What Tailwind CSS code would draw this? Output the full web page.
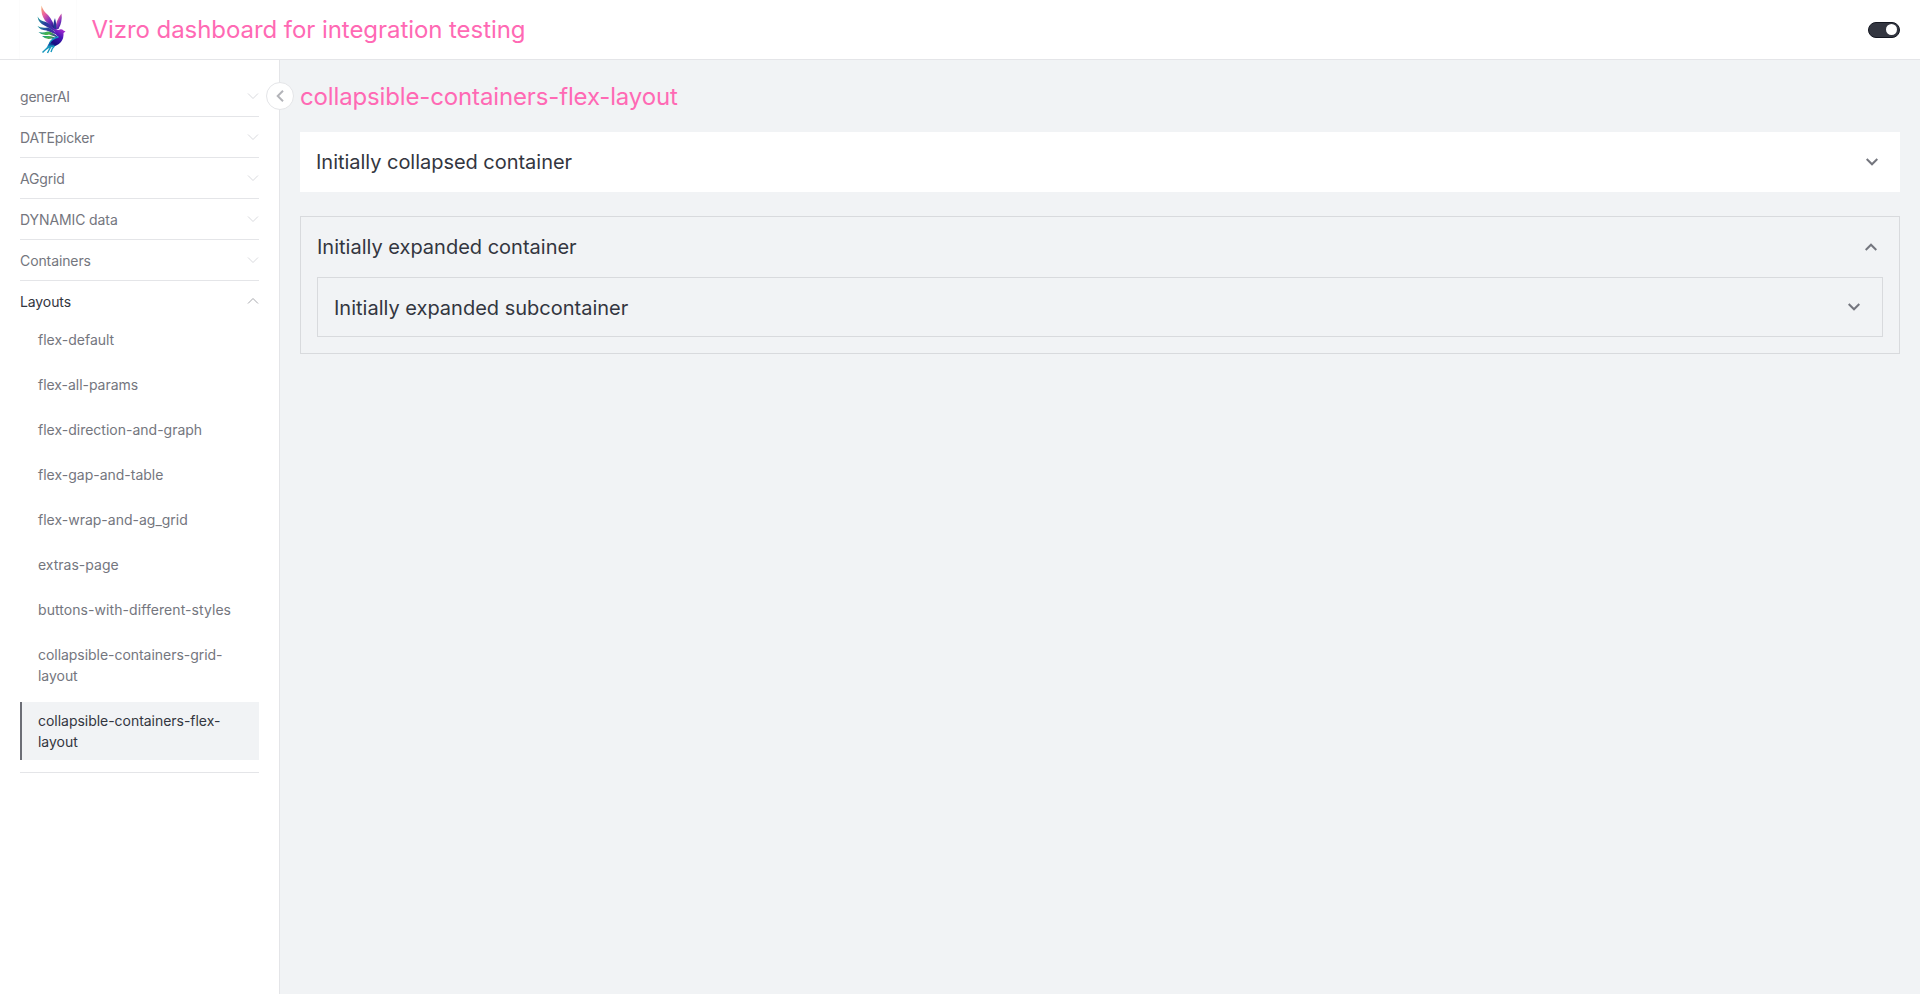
<!DOCTYPE html>
<html lang="en">
<head>
<meta charset="utf-8">
<title>Vizro dashboard for integration testing</title>
<script src="https://cdn.jsdelivr.net/npm/@tailwindcss/browser@4"></script>
</head>
<body class="flex h-screen flex-col overflow-hidden bg-[#f1f3f5] font-['Inter',sans-serif]">
<header class="flex h-[60px] shrink-0 items-center justify-between border-b border-[#e4e5e8] bg-white pr-5 pl-[19px]">
  <div class="flex items-center gap-[14.5px]">
    <svg class="h-[59px] w-[58px] shadow-[inset_1px_0_0_#fcfcfc,inset_-1px_0_0_#fcfcfc]" viewBox="19 0 58 59">
      <defs>
        <linearGradient id="w1" x1="0" y1="0" x2="0.7" y2="1"><stop offset="0" stop-color="#f7b267"/><stop offset=".35" stop-color="#ec5fa0"/><stop offset=".7" stop-color="#7a2fc0"/><stop offset="1" stop-color="#2a1a8c"/></linearGradient>
        <linearGradient id="w2" x1="0" y1="0" x2="1" y2="1"><stop offset="0" stop-color="#19a39a"/><stop offset=".45" stop-color="#2a3c9c"/><stop offset="1" stop-color="#5a1fb0"/></linearGradient>
        <linearGradient id="w3" x1="0" y1="0" x2="1" y2="0.5"><stop offset="0" stop-color="#0d8c9c"/><stop offset=".5" stop-color="#4cb748"/><stop offset="1" stop-color="#26339a"/></linearGradient>
        <linearGradient id="bd" x1="0.8" y1="0" x2="0.2" y2="1"><stop offset="0" stop-color="#b02bd0"/><stop offset=".35" stop-color="#4a16b8"/><stop offset=".75" stop-color="#160d80"/><stop offset="1" stop-color="#1593c4"/></linearGradient>
      </defs>
      <path fill="url(#w1)" d="M41.500 5.500Q40.500 14 45 20.500L55 30Q53.500 21 48 15Q43 11 41.500 5.500Z"/>
      <path fill="url(#w2)" d="M37.500 16.500Q38.500 23 44.500 25.500L56 32Q52.500 25 46 22Q40 21 37.500 16.500Z"/>
      <path fill="url(#w2)" d="M37.500 26Q40 30 46.500 30.500L57.500 35Q53.500 29 47.500 27.500Q41 28.500 37.500 26Z"/>
      <path fill="url(#w3)" d="M38.500 32Q43 36.500 49 34.500L59 38Q53.500 32 47.500 31.500Q43 33 38.500 32Z"/>
      <path fill="url(#w3)" d="M42 36Q46 40 51.500 38.500L58 40Q53 35.500 48 36Z"/>
      <path fill="url(#w1)" d="M61.500 13.500Q62.500 22 58.500 29L55.500 29Q55.500 21 61.500 13.500Z"/>
      <path fill="#233596" d="M55 18Q52.500 24 54 29L56.500 30Q56.500 23 55 18Z"/>
      <path fill="url(#bd)" d="M65.500 31.500L63.500 30.500Q61.500 28.500 58.500 30L53.500 28.500Q55.500 35 58.500 37Q52.500 38 48.500 44L46.500 48Q57 47 61 42Q64 38 63.500 33Z"/>
      <path fill="none" stroke="#1597bd" stroke-width="1.400" d="M58.500 37Q52.500 38 49.500 43M54 46L50 46.500Q46 48.500 42.500 52.500M51 46.500Q49 50 47.500 53M54.500 46Q52 48 51 52"/>
    </svg>
    <div class="text-2xl leading-8 tracking-[-0.06px] text-[#ff69b4]">Vizro dashboard for integration testing</div>
  </div>
  <div class="flex h-4 w-8 items-center justify-end rounded-full border border-[#141721] bg-[#333640] pr-[2px]"><div class="size-[11px] rounded-full bg-white"></div></div>
</header>
<div class="flex min-h-0 flex-1">
  <aside class="relative w-[280px] shrink-0 border-r border-[#e4e5e8] bg-white px-5 pt-4 text-sm text-[#74767e]">
    <div class="absolute top-[22px] -right-[15px] z-10 flex size-7 items-center justify-center rounded-full border border-[#e4e5e8] bg-white"><svg class="h-3 w-2" viewBox="0 0 8 12" fill="none" stroke="#b3b4b9" stroke-width="2"><path d="M7 .7L1.700 6L7 11.300"/></svg></div>
    <nav class="w-[239px]">
      <div class="flex h-[41px] items-center justify-between border-b border-[#e4e5e8]"><span class="pt-0.5 tracking-[-0.2px]">generAI</span><svg class="size-3" viewBox="0 0 12 12" fill="none" stroke="#d9dade"><path d="M1 3.500L6 8.500L11 3.500"/></svg></div>
      <div class="flex h-[41px] items-center justify-between border-b border-[#e4e5e8]"><span class="pt-0.5 tracking-[-0.2px]">DATEpicker</span><svg class="size-3" viewBox="0 0 12 12" fill="none" stroke="#d9dade"><path d="M1 3.500L6 8.500L11 3.500"/></svg></div>
      <div class="flex h-[41px] items-center justify-between border-b border-[#e4e5e8]"><span class="pt-0.5 tracking-[-0.15px]">AGgrid</span><svg class="size-3" viewBox="0 0 12 12" fill="none" stroke="#d9dade"><path d="M1 3.500L6 8.500L11 3.500"/></svg></div>
      <div class="flex h-[41px] items-center justify-between border-b border-[#e4e5e8]"><span class="pt-0.5 tracking-[-0.1px]">DYNAMIC data</span><svg class="size-3" viewBox="0 0 12 12" fill="none" stroke="#d9dade"><path d="M1 3.500L6 8.500L11 3.500"/></svg></div>
      <div class="flex h-[41px] items-center justify-between border-b border-[#e4e5e8]"><span class="pt-0.5 tracking-[-0.1px]">Containers</span><svg class="size-3" viewBox="0 0 12 12" fill="none" stroke="#d9dade"><path d="M1 3.500L6 8.500L11 3.500"/></svg></div>
      <div class="flex h-10 items-center justify-between text-[#333640]"><span class="pt-0.5 tracking-[-0.1px]">Layouts</span><svg class="size-3" viewBox="0 0 12 12" fill="none" stroke="#a7a8ad"><path d="M1 8.500L6 3.500L11 8.500"/></svg></div>
      <div class="flex flex-col gap-2 border-b border-[#e4e5e8] pb-3 leading-[21px] *:py-2 *:pr-4 *:pl-[18px]">
        <a class="h-[37px]">flex-default</a>
        <a class="h-[37px] tracking-[-0.04px]">flex-all-params</a>
        <a class="h-[37px]">flex-direction-and-graph</a>
        <a class="h-[37px]">flex-gap-and-table</a>
        <a class="h-[37px]">flex-wrap-and-ag_grid</a>
        <a class="h-[37px]">extras-page</a>
        <a class="h-[37px] tracking-[0.07px]">buttons-with-different-styles</a>
        <a class="h-[58px] tracking-[-0.04px]">collapsible-containers-grid-<br>layout</a>
        <a class="h-[58px] bg-[#f1f3f5] tracking-[-0.03px] text-[#333640] shadow-[inset_2px_0_0_#6c6e76]">collapsible-containers-flex-<br>layout</a>
      </div>
    </nav>
  </aside>
  <main class="flex-1 px-5 pt-[21px] text-[#333640]">
    <h1 class="h-[51px] text-2xl leading-8 tracking-[-0.14px] text-[#ff69b4]">collapsible-containers-flex-layout</h1>
    <section class="flex h-[60px] items-center justify-between bg-white pr-[22px] pl-4 text-xl">
      <h3 class="tracking-[-0.03px]">Initially collapsed container</h3>
      <svg class="h-2 w-3" viewBox="0 0 12 8" fill="none" stroke="#74767e" stroke-width="2"><path d="M.7 1L6 6.300L11.300 1"/></svg>
    </section>
    <section class="mt-6 h-[138px] border border-[#d8dadd] px-4 text-xl">
      <div class="flex h-[60px] items-center justify-between pr-[6px]">
        <h3>Initially expanded container</h3>
        <svg class="h-2 w-3" viewBox="0 0 12 8" fill="none" stroke="#74767e" stroke-width="2"><path d="M.7 7L6 1.700L11.300 7"/></svg>
      </div>
      <div class="flex h-[60px] items-center justify-between border border-[#d8dadd] pr-[22px] pl-4">
        <h3 class="pt-0.5">Initially expanded subcontainer</h3>
        <svg class="h-2 w-3" viewBox="0 0 12 8" fill="none" stroke="#74767e" stroke-width="2"><path d="M.7 1L6 6.300L11.300 1"/></svg>
      </div>
    </section>
  </main>
</div>
</body>
</html>
